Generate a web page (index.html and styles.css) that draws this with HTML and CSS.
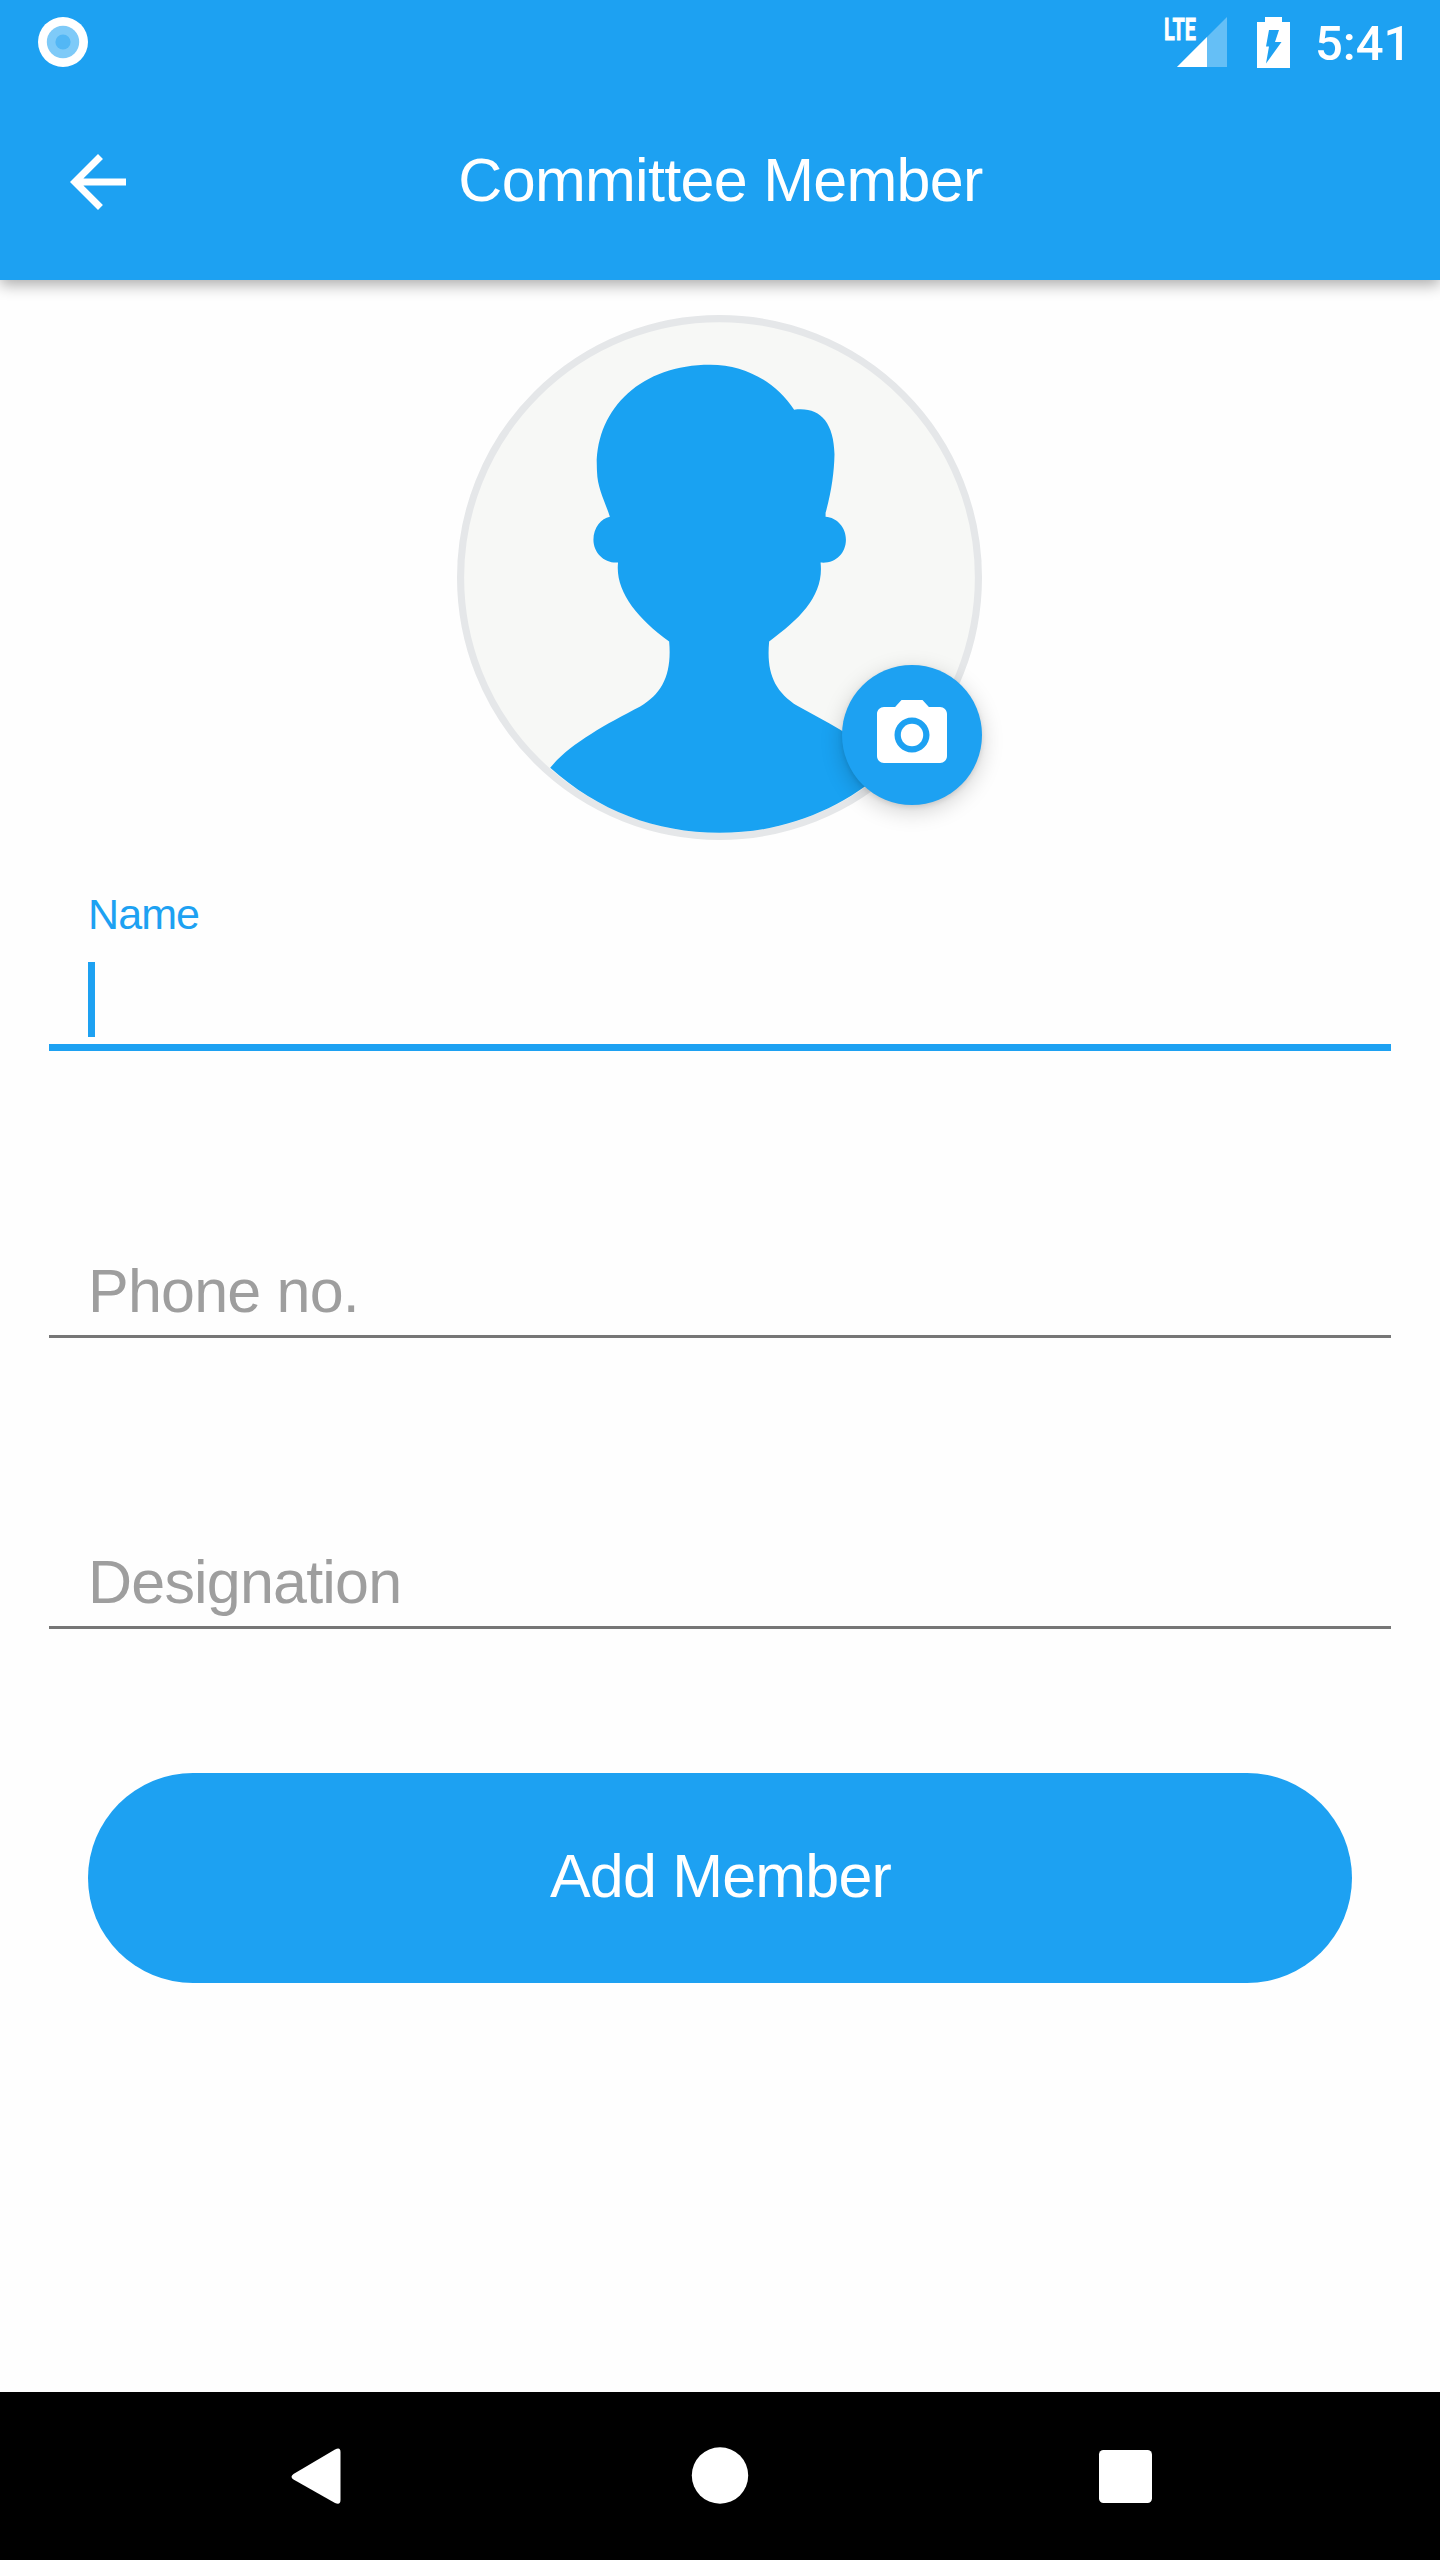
FILE: index.html
```html
<!DOCTYPE html>
<html lang="en">
<head>
<meta charset="utf-8">
<title>Committee Member</title>
<link rel="stylesheet" href="styles.css">
</head>
<body>
<div class="screen">
  <header class="header">
    <div class="status-bar">
      <svg class="record-icon" viewBox="0 0 50 50"><circle cx="25" cy="25" r="25" fill="#fff"/><circle cx="25" cy="25" r="16.2" fill="#7ecaf8"/><circle cx="25" cy="25" r="7.6" fill="#53b7f5"/></svg>
      <div class="status-right">
        <svg class="signal-icon" viewBox="0 0 64 52">
          <text class="lte" x="1" y="24" textLength="32" lengthAdjust="spacingAndGlyphs">LTE</text>
          <path d="M64 1V51H14Z" fill="#fff" fill-opacity=".32"/>
          <path d="M44 21V51H14Z" fill="#fff"/>
        </svg>
        <svg class="battery-icon" viewBox="0 0 33 51"><path fill="#fff" fill-rule="evenodd" d="M8 0H25V5H33V51H0V5H8ZM12 13L9 29.500H12L9 46.500L24.500 25H18L22 13Z"/></svg>
        <span class="clock">5:41</span>
      </div>
    </div>
    <div class="app-bar">
      <svg class="back-icon" viewBox="0 0 24 24"><path fill="#fff" d="M20 11H7.830l5.590-5.590L12 4l-8 8 8 8 1.410-1.410L7.830 13H20v-2z"/></svg>
      <h1 class="title">Committee Member</h1>
    </div>
  </header>

  <main class="content">
    <div class="avatar">
      <svg class="portrait" viewBox="48 42 1470 1470">
        <circle cx="783" cy="777" r="725" fill="#f7f8f6" stroke="#e5e7e9" stroke-width="20"/>
        <path fill="#19a2f2" d="M757 181C858 181 940 231 992 307C1061 298 1103 338 1105 432C1104 484 1096 539 1080 596V607C1112 609 1137 637 1137 671C1137 709 1107 739 1066 735C1076 825 1013 890 922 956C914 1041 935 1095 1002 1137C1080 1180 1160 1219 1229 1281L1254 1312C1120 1430 960 1492 783 1492C604 1492 443 1430 309 1310C359 1246 460 1190 561 1138C624 1101 650 1046 642 956C550 890 490 813 499 735C460 738 430 707 430 671C430 638 452 611 476 607C462 563 441 526 440 480C430 309 560 181 757 181Z"/>
      </svg>
      <button class="camera-button" type="button" aria-label="Change photo">
        <svg class="camera-icon" viewBox="0 0 24 24" fill="#fff"><circle cx="12" cy="12" r="3.200"/><path d="M9 2L7.170 4H4c-1.100 0-2 .9-2 2v12c0 1.100.9 2 2 2h16c1.100 0 2-.9 2-2V6c0-1.100-.9-2-2-2h-3.170L15 2H9zm3 15c-2.760 0-5-2.240-5-5s2.240-5 5-5 5 2.240 5 5-2.240 5-5 5z"/></svg>
      </button>
    </div>

    <form class="form">
      <div class="field field-active">
        <span class="label">Name</span>
        <span class="caret"></span>
      </div>
      <div class="field">
        <span class="placeholder">Phone no.</span>
      </div>
      <div class="field">
        <span class="placeholder">Designation</span>
      </div>
      <button class="submit" type="button">Add Member</button>
    </form>
  </main>

  <nav class="nav-bar">
    <svg class="nav-icon" viewBox="0 0 60 60"><path fill="#fff" d="M2.500 27L44 2.500Q49.500-.5 49.500 5V53Q49.500 58.500 44 56L2.500 32.500Q-1.500 29.800 2.500 27Z"/></svg>
    <svg class="nav-icon nav-home" viewBox="0 0 60 60"><circle cx="30" cy="28.500" r="28.200" fill="#fff"/></svg>
    <svg class="nav-icon" viewBox="0 0 60 60"><rect x="3" y="3" width="53" height="53" rx="4.500" fill="#fff"/></svg>
  </nav>
</div>
</body>
</html>
```
FILE: styles.css
```css
* { box-sizing: border-box; }

body {
  margin: 0;
  background: #fefefe;
  font-family: "Liberation Sans", Arial, sans-serif;
}

.screen {
  width: 1440px;
  height: 2560px;
  display: flex;
  flex-direction: column;
  overflow: hidden;
}

svg { display: block; flex: none; overflow: visible; }

.header {
  height: 280px;
  background: #1da1f2;
  box-shadow: 0 5px 14px rgba(0, 0, 0, .32);
  color: #fff;
}

.status-bar {
  height: 84px;
  padding: 0 36px 0 38px;
  display: flex;
  align-items: center;
  justify-content: space-between;
}

.record-icon { width: 50px; height: 50px; }

.status-right { display: flex; align-items: center; }

.signal-icon { width: 64px; height: 52px; margin-right: 30px; }

.lte {
  font: 700 31px Roboto, sans-serif;
  fill: #fff;
  stroke: #fff;
  stroke-width: .8px;
}

.battery-icon { width: 33px; height: 51px; margin-right: 25px; }

.clock {
  width: 89px;
  font: 500 49px/56px Roboto, sans-serif;
  padding-top: 3px;
  white-space: nowrap;
}

.app-bar {
  height: 196px;
  padding: 0 56px;
  display: grid;
  grid-template-columns: 84px 1fr 84px;
  align-items: center;
}

.back-icon { width: 84px; height: 84px; }

.title {
  margin: 0;
  padding: 0 0 5px 1px;
  font-size: 61px;
  font-weight: 400;
  line-height: 70px;
  letter-spacing: -.7px;
  text-align: center;
}

.content {
  flex: 1;
  padding-top: 35px;
  display: flex;
  flex-direction: column;
  align-items: center;
}

.avatar {
  position: relative;
  width: 525px;
  height: 525px;
  margin-right: 1px;
}

.portrait { width: 525px; height: 525px; }

.camera-button {
  position: absolute;
  right: 0;
  bottom: 35px;
  width: 140px;
  height: 140px;
  padding: 28px;
  border: 0;
  border-radius: 50%;
  background: #1da1f2;
  box-shadow: 0 6px 22px rgba(0, 0, 0, .18), 0 2px 5px rgba(0, 0, 0, .1);
}

.camera-icon { width: 84px; height: 84px; }

.form {
  width: 1342px;
  display: flex;
  flex-direction: column;
}

.field {
  height: 291px;
  padding: 0 39px;
  display: flex;
  flex-direction: column;
  justify-content: flex-end;
  border-bottom: 3px solid #767676;
}

.field-active {
  height: 211px;
  border-bottom: 7px solid #1da1f2;
}

.field-active + .field { height: 287px; }

.label {
  font-size: 43px;
  line-height: 48px;
  letter-spacing: -.9px;
  color: #1da1f2;
  margin-bottom: 24px;
}

.caret {
  width: 7px;
  height: 75px;
  margin-bottom: 7px;
  background: #1da1f2;
}

.placeholder {
  font-size: 61px;
  line-height: 70px;
  letter-spacing: -.8px;
  margin-bottom: 9px;
  color: #9e9e9e;
}

.submit {
  height: 210px;
  margin: 144px 39px 0;
  padding: 0 0 4px 1px;
  border: 0;
  border-radius: 105px;
  background: #1da1f2;
  color: #fff;
  font: 400 61px/70px "Liberation Sans", Arial, sans-serif;
  letter-spacing: -.8px;
}

.nav-bar {
  height: 168px;
  padding: 55px 284px 0 291px;
  display: flex;
  justify-content: space-between;
  background: #000;
}

.nav-icon { width: 60px; height: 60px; }

.nav-home { margin-right: 7px; }
```
